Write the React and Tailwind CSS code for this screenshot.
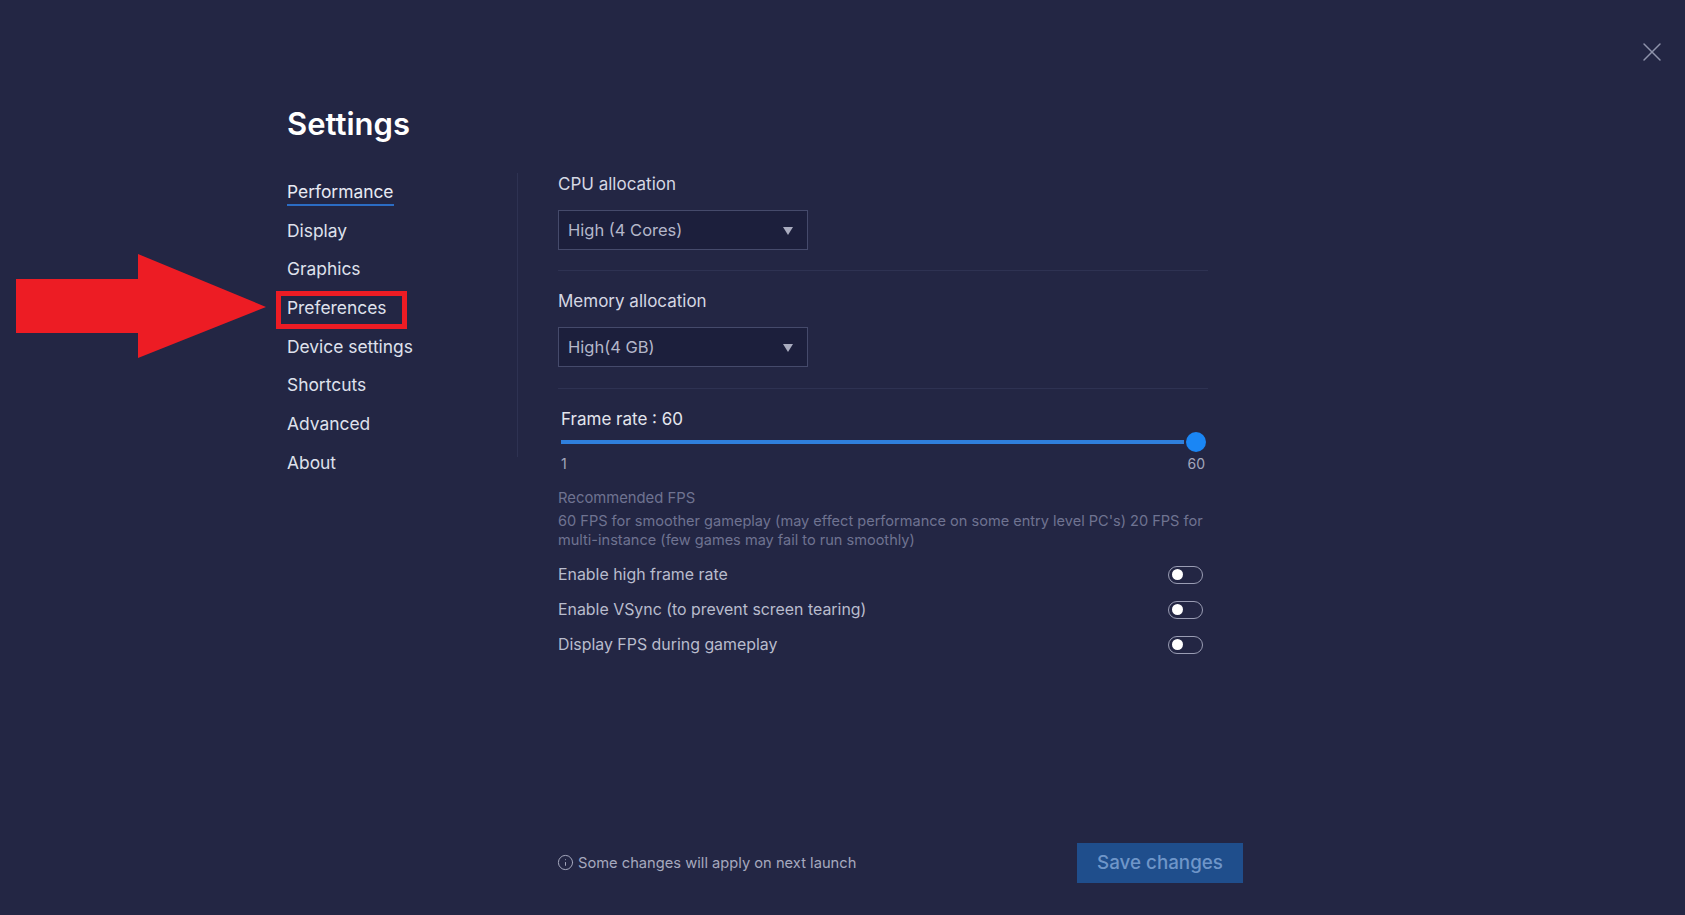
import React from "react";
import { X, Info } from "lucide-react";

const navItems = [
  "Performance",
  "Display",
  "Graphics",
  "Preferences",
  "Device settings",
  "Shortcuts",
  "Advanced",
  "About",
];

const toggles = [
  "Enable high frame rate",
  "Enable VSync (to prevent screen tearing)",
  "Display FPS during gameplay",
];

// Select Component
const SelectBox = ({ value }) => (
  <div className="mt-[15px] flex h-10 w-[250px] items-center justify-between border border-[#454a6b] bg-[#1c1f3c] pl-[9px] pr-[14px] text-[16.5px] text-[#b4b7ca]">
    <span>{value}</span>
    <svg width="10" height="8" viewBox="0 0 10 8" className="mt-px">
      <path d="M0 0h10L5 8z" fill="#a9acbf" />
    </svg>
  </div>
);

// Toggle Component
const ToggleRow = ({ label }) => (
  <div className="flex h-[35px] items-center justify-between pr-[5px] text-[15.9px] text-[#b9bccd]">
    <span>{label}</span>
    <div className="flex h-[18px] w-[35px] items-center rounded-full border-[1.5px] border-[#9a9db4] pl-[3px]">
      <div className="h-[11px] w-[11px] rounded-full bg-white"></div>
    </div>
  </div>
);

const App = () => {
  return (
    <div className="relative flex h-[915px] w-[1685px] flex-col overflow-hidden bg-[#232644] pl-[287px] font-['Inter',sans-serif]">
      {/* Close */}
      <div className="absolute right-[17px] top-9 text-[#8f93ab]">
        <X size={32} strokeWidth={1.1} />
      </div>

      {/* Annotation arrow */}
      <svg
        className="absolute left-4 top-[254px]"
        width="251"
        height="104"
        viewBox="0 0 251 104"
      >
        <path d="M0 25H122V0L250 53L122 104V79H0z" fill="#ed1c24" />
      </svg>

      <h1 className="mt-[104px] h-[69px] text-[31px] font-semibold leading-[40px] text-white">
        Settings
      </h1>

      <div className="flex flex-1">
        {/* Sidebar */}
        <div className="h-[284px] w-[231px] border-r border-[#2e3252]">
          {navItems.map((item, index) => (
            <div key={item} className="relative flex h-[38.7px] items-center pb-[0.6px] text-[17.4px] text-[#dfe1ec]">
              <span className={index === 0 ? "relative text-[#e8eaf3]" : ""}>
                {item}
                {index === 0 && (
                  <span className="absolute -bottom-px left-0 h-0.5 w-full bg-[#2b6cc4]"></span>
                )}
              </span>
              {item === "Preferences" && (
                <div className="absolute -left-[11px] top-[2px] h-[38px] w-[131px] border-[5px] border-[#ed1c24]"></div>
              )}
            </div>
          ))}
        </div>

        {/* Content */}
        <div className="ml-10 flex w-[685px] flex-col pb-8">
          <div className="w-[650px]">
            <div className="text-[17px] leading-[22px] text-[#d5d7e3]">CPU allocation</div>
            <SelectBox value="High (4 Cores)" />
            <div className="mt-5 h-px bg-[#2e3252]"></div>

            <div className="mt-5 text-[17px] leading-[21px] text-[#d5d7e3]">Memory allocation</div>
            <SelectBox value="High(4 GB)" />
            <div className="mt-[21px] h-px bg-[#2e3252]"></div>

            <div className="ml-[3px] mt-[19px] text-[17px] leading-[22px] text-[#e3e5ee]">Frame rate : 60</div>
            <div className="ml-[3px] mr-[2px] mt-[2px] flex h-5 items-center">
              <div className="h-1 flex-1 bg-[#2f7fdc]"></div>
              <div className="ml-[2px] h-5 w-5 rounded-full bg-[#1a86f5]"></div>
            </div>
            <div className="ml-[3px] mr-[3px] mt-[3px] flex justify-between text-[14px] leading-[18px] text-[#a3a6bb]">
              <span>1</span>
              <span>60</span>
            </div>

            <div className="mt-[15px] text-[14.8px] leading-[20px] text-[#6f7391]">Recommended FPS</div>
            <p className="mt-1 text-[14.55px] leading-[19px] text-[#6f7391]">
              60 FPS for smoother gameplay (may effect performance on some entry level PC's) 20 FPS for
              multi-instance (few games may fail to run smoothly)
            </p>
            <div className="mt-[7px]">
              {toggles.map((label) => (
                <ToggleRow key={label} label={label} />
              ))}
            </div>
          </div>

          {/* Footer */}
          <div className="mt-auto flex items-center justify-between">
            <div className="-ml-px flex items-center gap-1 text-[14.7px] text-[#a6a9be]">
              <Info size={17} strokeWidth={1.4} />
              <span>Some changes will apply on next launch</span>
            </div>
            <button className="h-10 w-[166px] bg-[#1f4e8c] text-[18.8px] font-medium text-[#6f96c9]">
              Save changes
            </button>
          </div>
        </div>
      </div>
    </div>
  );
};

export default App;
